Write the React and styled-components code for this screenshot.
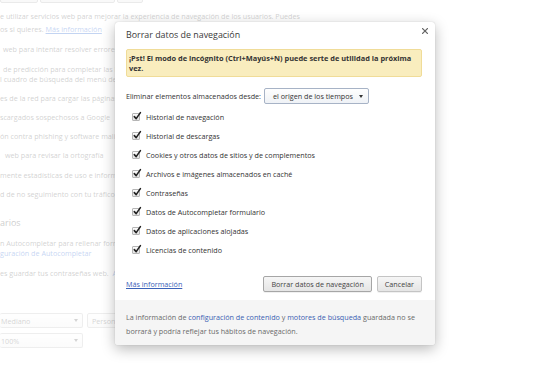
import React from 'react';
import styled, { createGlobalStyle } from 'styled-components';

const Global = createGlobalStyle`
  html, body { margin: 0; padding: 0; background: #fff; }
  body { font-family: "Open Sans", "Noto Sans", sans-serif; }
  #root { width: 560px; height: 373px; overflow: hidden; }
`;

const Page = styled.div`
  position: relative;
  width: 560px;
  height: 373px;
  overflow: hidden;
  font-family: "Open Sans", "Noto Sans", sans-serif;
  font-size: 7.2px;
  color: #333;
`;

/* ---------- background settings page ---------- */
const Settings = styled.div`
  display: flex;
  flex-direction: column;
`;

const TopButtons = styled.div`
  display: flex;
  gap: 2px;
  margin-top: -17px;
`;

const TopButton = styled.div`
  box-sizing: border-box;
  width: ${(p) => p.$w}px;
  height: 20px;
  border: 1px solid #aaa;
  border-radius: 2px;
  background: linear-gradient(#f6f6f6, #e6e6e6);
`;

const Line = styled.div`
  height: 10px;
  line-height: 10px;
  white-space: nowrap;
  margin-top: ${(p) => p.$mt || 0}px;
  padding-left: ${(p) => p.$indent || 0}px;
  color: #4a4a4a;
`;

const Heading = styled(Line)`
  height: 12px;
  line-height: 12px;
  font-size: 9px;
  color: #333;
`;

const BgLink = styled.span`
  color: #15c;
  text-decoration: ${(p) => (p.$underline ? 'underline' : 'none')};
`;

const SelectRow = styled.div`
  display: flex;
  gap: 4px;
  margin-top: ${(p) => p.$mt}px;
`;

const BgSelect = styled.div`
  box-sizing: border-box;
  width: ${(p) => p.$w}px;
  height: 15px;
  border: 1px solid #bbb;
  border-left: ${(p) => (p.$cut ? 'none' : '1px solid #bbb')};
  border-radius: 2px;
  display: flex;
  align-items: center;
  justify-content: space-between;
  padding: 0 4px 0 ${(p) => (p.$cut ? 1 : 4)}px;
  color: #555;
  background: linear-gradient(#fcfcfc, #f0f0f0);
`;

const BgArrow = styled.span`
  width: 0;
  height: 0;
  border-left: 2.5px solid transparent;
  border-right: 2.5px solid transparent;
  border-top: 3px solid #555;
`;

const Veil = styled.div`
  position: absolute;
  inset: 0;
  background: rgba(255, 255, 255, 0.75);
`;

/* ---------- dialog ---------- */
const Dialog = styled.div`
  position: absolute;
  left: 115px;
  top: 22px;
  width: 320px;
  background: #fff;
  border-radius: 3px;
  overflow: hidden;
  box-shadow: 0 4px 14px rgba(0, 0, 0, 0.28), 0 0 1px rgba(0, 0, 0, 0.25);
  color: #333;
`;

const Header = styled.div`
  display: flex;
  justify-content: space-between;
  align-items: flex-start;
  padding: 7px 7px 0 11px;
`;

const Title = styled.div`
  font-size: 8.9px;
  line-height: 12px;
  color: #3a3a3a;
`;

const Close = styled.svg`
  width: 6px;
  height: 6px;
  margin-top: -1px;
`;

const Body = styled.div`
  padding: 0 13px 0 11px;
`;

const Banner = styled.div`
  box-sizing: border-box;
  margin-top: 8px;
  height: 28px;
  padding: 3px 2px;
  background: #f9edbe;
  border: 1px solid #f0dc98;
  border-radius: 2px;
  font-weight: 700;
  font-size: 7.4px;
  line-height: 10px;
  color: #333;
`;

const FromRow = styled.div`
  display: flex;
  align-items: center;
  gap: 3px;
  margin-top: 11px;
  height: 16px;
`;

const Select = styled.div`
  box-sizing: border-box;
  width: 105px;
  height: 16px;
  display: flex;
  align-items: center;
  justify-content: space-between;
  padding: 0 5px 0 8px;
  border: 1px solid #a7b3c6;
  border-radius: 2px;
  background: linear-gradient(#fefefe, #eff2f6);
  color: #333;
`;

const Arrow = styled.span`
  width: 0;
  height: 0;
  border-left: 2.5px solid transparent;
  border-right: 2.5px solid transparent;
  border-top: 3.5px solid #333;
`;

const Checks = styled.div`
  display: flex;
  flex-direction: column;
  margin-top: 3px;
  padding-left: 6px;
`;

const CheckRow = styled.label`
  display: flex;
  align-items: center;
  gap: 6px;
  height: 19px;
`;

const Box = styled.span`
  box-sizing: border-box;
  width: 8px;
  height: 8px;
  border: 1px solid #b5b5b5;
  border-radius: 1px;
  background: linear-gradient(#fbfbfb, #e4e4e4);
  position: relative;
`;

const Tick = styled.svg`
  position: absolute;
  left: 0px;
  top: -2px;
  width: 8px;
  height: 8px;
  overflow: visible;
`;

const Actions = styled.div`
  display: flex;
  align-items: center;
  margin-top: 17px;
  height: 16px;
`;

const Link = styled.a`
  color: #3b62b8;
  text-decoration: underline;
  margin-right: auto;
`;

const Buttons = styled.div`
  display: flex;
  gap: 5px;
`;

const Button = styled.button`
  box-sizing: border-box;
  height: 16px;
  padding: 0 7px;
  font-family: inherit;
  font-size: 7.2px;
  color: #444;
  border: 1px solid ${(p) => (p.$primary ? '#a6a6a6' : '#c4c4c4')};
  border-radius: 2px;
  background: linear-gradient(#f6f6f6, #e5e5e5);
  box-shadow: 0 1px 0 rgba(0, 0, 0, 0.06);
`;

const Footer = styled.div`
  margin-top: 8px;
  padding: 10px 13px 7px 11px;
  background: #f5f5f5;
  line-height: 14px;
  color: #6a6a6a;
`;

const FootLink = styled.span`
  color: #3b5fb3;
`;

const items = [
  'Historial de navegación',
  'Historial de descargas',
  'Cookies y otros datos de sitios y de complementos',
  'Archivos e imágenes almacenados en caché',
  'Contraseñas',
  'Datos de Autocompletar formulario',
  'Datos de aplicaciones alojadas',
  'Licencias de contenido',
];

function Check({ children }) {
  return (
    <CheckRow>
      <Box>
        <Tick viewBox="0 0 8 8">
          <path d="M1.3 4.6 L3.2 6.6 L7.4 0.6" fill="none" stroke="#222" strokeWidth="1.6" strokeLinecap="round" strokeLinejoin="round" />
        </Tick>
      </Box>
      <span>{children}</span>
    </CheckRow>
  );
}

export default function App() {
  return (
    <Page>
      <Global />
      <Settings>
        <TopButtons>
          <TopButton $w={38} />
          <TopButton $w={75} />
          <TopButton $w={26} />
        </TopButtons>
        <Line $mt={8}>e utilizar servicios web para mejorar la experiencia de navegación de los usuarios. Puedes</Line>
        <Line $mt={3}>os si quieres. <BgLink $underline>Más información</BgLink></Line>
        <Line $mt={10} $indent={3}>web para intentar resolver errores de navegación</Line>
        <Line $mt={10} $indent={3}>de predicción para completar las búsquedas y las URL</Line>
        <Line>l cuadro de búsqueda del menú de aplicaciones</Line>
        <Line $mt={9}>es de la red para cargar las páginas más rápido</Line>
        <Line $mt={9}>scargados sospechosos a Google</Line>
        <Line $mt={9}>ón contra phishing y software malicioso</Line>
        <Line $mt={9} $indent={5}>web para revisar la ortografía</Line>
        <Line $mt={10}>mente estadísticas de uso e informes de errores</Line>
        <Line $mt={9}>d de no seguimiento con tu tráfico de navegación</Line>
        <Heading $mt={18}>arios</Heading>
        <Line $mt={9}>n Autocompletar para rellenar formularios</Line>
        <Line><BgLink>guración de Autocompletar</BgLink></Line>
        <Line $mt={10}>es guardar tus contraseñas web.&nbsp; <BgLink>Administrar contraseñas</BgLink></Line>
        <SelectRow $mt={35}>
          <BgSelect $w={83} $cut>Mediano<BgArrow /></BgSelect>
          <BgSelect $w={80}>Personalizar fuentes</BgSelect>
        </SelectRow>
        <SelectRow $mt={5}>
          <BgSelect $w={83} $cut>100%<BgArrow /></BgSelect>
        </SelectRow>
      </Settings>
      <Veil />
      <Dialog>
        <Header>
          <Title>Borrar datos de navegación</Title>
          <Close viewBox="0 0 6 6">
            <path d="M0.6 0.6 L5.4 5.4 M5.4 0.6 L0.6 5.4" stroke="#666" strokeWidth="1.3" strokeLinecap="round" />
          </Close>
        </Header>
        <Body>
          <Banner>¡Pst! El modo de incógnito (Ctrl+Mayús+N) puede serte de utilidad la próxima vez.</Banner>
          <FromRow>
            <span>Eliminar elementos almacenados desde:</span>
            <Select>
              <span>el origen de los tiempos</span>
              <Arrow />
            </Select>
          </FromRow>
          <Checks>
            {items.map((t) => (
              <Check key={t}>{t}</Check>
            ))}
          </Checks>
          <Actions>
            <Link href="#">Más información</Link>
            <Buttons>
              <Button $primary>Borrar datos de navegación</Button>
              <Button>Cancelar</Button>
            </Buttons>
          </Actions>
        </Body>
        <Footer>
          La información de <FootLink>configuración de contenido</FootLink> y <FootLink>motores de búsqueda</FootLink> guardada no se borrará y podría reflejar tus hábitos de navegación.
        </Footer>
      </Dialog>
    </Page>
  );
}
